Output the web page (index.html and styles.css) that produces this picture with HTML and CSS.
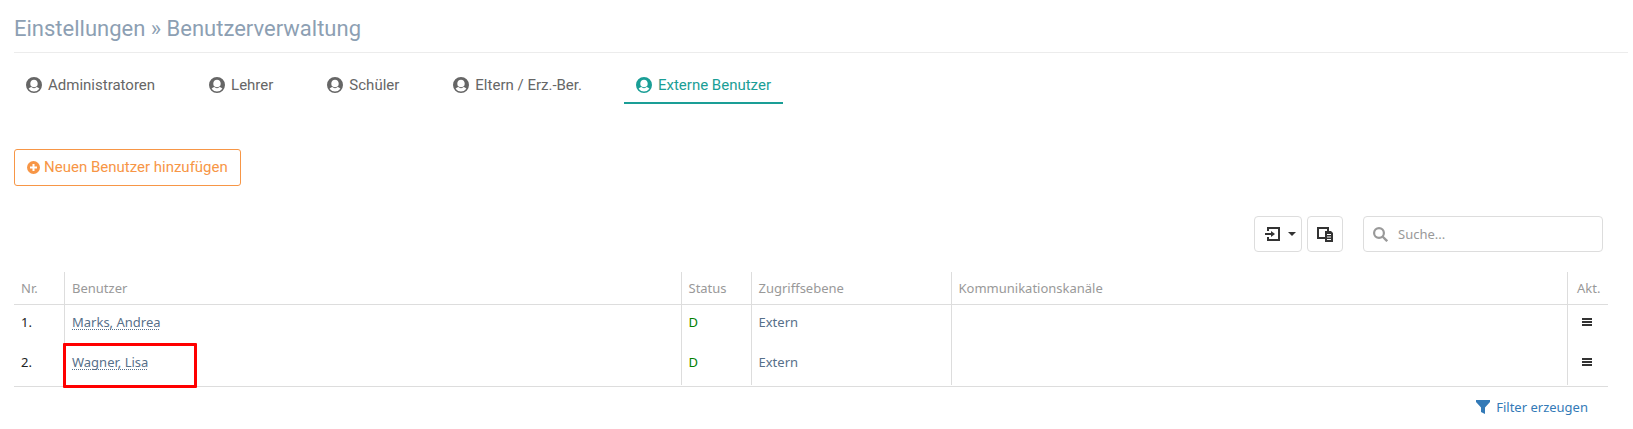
FILE: index.html
```html
<!DOCTYPE html>
<html lang="de">
<head>
  <meta charset="UTF-8" />
  <meta name="viewport" content="width=device-width, initial-scale=1" />
  <title>Einstellungen » Benutzerverwaltung</title>
  <link rel="stylesheet" href="styles.css">
</head>
<body>
  <!-- shared icons -->
  <svg class="sprite" aria-hidden="true">
    <symbol id="icon-user" viewBox="0 0 16 16">
      <path fill="currentColor" fill-rule="evenodd" d="M8 0a8 8 0 1 0 0 16A8 8 0 0 0 8 0zM8 2.800c2.200 0 3.700 1.500 3.700 3.700 0 1.400-.5 2.600-1.300 3.400 1.600.3 2.500 1 3 1.900A6.600 6.600 0 0 1 8 14.600a6.600 6.600 0 0 1-5.400-2.800c.5-.9 1.400-1.600 3-1.900-.8-.8-1.300-2-1.300-3.400 0-2.200 1.500-3.700 3.700-3.700z" />
      <path fill="none" stroke="currentColor" d="M5.400 9.600c1.400 1.500 3.800 1.500 5.200 0" />
    </symbol>
    <symbol id="icon-menu" viewBox="0 0 10 8">
      <path fill="currentColor" d="M0 0h10v2H0zM0 3h10v2H0zM0 6h10v2H0z" />
    </symbol>
  </svg>

  <h1>Einstellungen » Benutzerverwaltung</h1>

  <nav class="tabs">
    <a href="#" class="tab"><svg class="user-icon"><use href="#icon-user" /></svg>Administratoren</a>
    <a href="#" class="tab"><svg class="user-icon"><use href="#icon-user" /></svg>Lehrer</a>
    <a href="#" class="tab"><svg class="user-icon"><use href="#icon-user" /></svg>Schüler</a>
    <a href="#" class="tab"><svg class="user-icon"><use href="#icon-user" /></svg>Eltern / Erz.-Ber.</a>
    <a href="#" class="tab active" aria-current="page"><svg class="user-icon"><use href="#icon-user" /></svg>Externe Benutzer</a>
  </nav>

  <main>
    <button type="button" class="add-user">
      <svg class="plus-icon" viewBox="0 0 13 13">
        <circle cx="6.500" cy="6.500" r="6.500" fill="currentColor" />
        <path d="M6.500 3v7M3 6.500h7" stroke="#fff" stroke-width="2" />
      </svg>
      Neuen Benutzer hinzufügen
    </button>

    <div class="toolbar">
      <button type="button" class="tool export" aria-label="Exportieren">
        <svg width="16" height="14" viewBox="0 0 16 14">
          <path d="M3 4V1h11v12H3v-3" fill="none" stroke="currentColor" stroke-width="2" />
          <path d="M0 7h8" stroke="currentColor" stroke-width="2" />
          <path d="M6 4l4 3-4 3z" fill="currentColor" />
        </svg>
        <svg width="8" height="4" viewBox="0 0 8 4">
          <path d="M0 0h8L4 4z" fill="currentColor" />
        </svg>
      </button>
      <button type="button" class="tool" aria-label="Spalten">
        <svg width="16" height="15" viewBox="0 0 16 15">
          <path d="M8 11H1V1h10v3" fill="none" stroke="currentColor" stroke-width="2" />
          <path d="M8 4h6l2 2v9H8z" fill="currentColor" />
          <path d="M10 7.500h4M10 10h4M10 12.500h4" stroke="#fff" />
        </svg>
      </button>
      <label class="search">
        <svg width="15" height="15" viewBox="0 0 15 15">
          <circle cx="6" cy="6" r="4.900" fill="none" stroke="currentColor" stroke-width="2.200" />
          <path d="M9.500 9.500l4.700 4.700" stroke="currentColor" stroke-width="2.400" />
        </svg>
        <input type="text" placeholder="Suche..." aria-label="Suche" />
      </label>
    </div>

    <div class="table-wrap">
      <table>
        <thead>
          <tr>
            <th class="col-nr">Nr.</th>
            <th>Benutzer</th>
            <th class="col-status">Status</th>
            <th class="col-level">Zugriffsebene</th>
            <th>Kommunikationskanäle</th>
            <th class="col-action">Akt.</th>
          </tr>
        </thead>
        <tbody>
          <tr>
            <td class="nr">1.</td>
            <td><a href="#" class="user">Marks, Andrea</a></td>
            <td class="status">D</td>
            <td>Extern</td>
            <td></td>
            <td class="action"><button type="button" class="menu" aria-label="Aktionen"><svg width="10" height="8"><use href="#icon-menu" /></svg></button></td>
          </tr>
          <tr>
            <td class="nr">2.</td>
            <td class="marked"><a href="#" class="user">Wagner, Lisa</a></td>
            <td class="status">D</td>
            <td>Extern</td>
            <td></td>
            <td class="action"><button type="button" class="menu" aria-label="Aktionen"><svg width="10" height="8"><use href="#icon-menu" /></svg></button></td>
          </tr>
        </tbody>
      </table>
    </div>

    <a href="#" class="filter">
      <svg width="14" height="14" viewBox="0 0 14 14">
        <path d="M0 0h14v2L9 7.500V14l-4-2V7.500L0 2z" fill="currentColor" />
      </svg>
      Filter erzeugen
    </a>
  </main>
</body>
</html>
```
FILE: styles.css
```css
*,
*::after {
  box-sizing: border-box;
}

body {
  margin: 0;
  padding: 13px 5px 0 14px;
  background: #fff;
  color: #57708a;
  font-family: "Noto Sans", "Open Sans", sans-serif;
  font-size: 13px;
  line-height: 20px;
}

svg {
  display: block;
  flex-shrink: 0;
}

.sprite {
  position: absolute;
  width: 0;
  height: 0;
}

h1 {
  margin: 0;
  padding-bottom: 7px;
  border-bottom: 1px solid #ececec;
  color: #8d9fb3;
  font-family: Roboto, sans-serif;
  font-size: 22px;
  font-weight: 400;
  line-height: 32px;
}

/* Tabs */
.tabs {
  display: flex;
  gap: 30px;
  margin-top: 15px;
}

.tab {
  display: flex;
  align-items: center;
  gap: 6px;
  padding: 7px 12px;
  border-bottom: 2px solid transparent;
  color: #666;
  font-family: Roboto, sans-serif;
  font-size: 15px;
  text-decoration: none;
}

.tab.active {
  border-bottom-color: #1a9e96;
  color: #1a9e96;
}

.user-icon {
  width: 16px;
  height: 16px;
}

main {
  display: flex;
  flex-direction: column;
  align-items: flex-start;
  padding-right: 20px;
}

.add-user {
  display: flex;
  align-items: center;
  gap: 4px;
  margin-top: 45px;
  padding: 8px 12px 9px;
  border: 1px solid #f79646;
  border-radius: 3px;
  background: #fff;
  color: #f79646;
  font-family: Roboto, sans-serif;
  font-size: 15px;
  line-height: 18px;
  cursor: pointer;
}

.plus-icon {
  width: 13px;
  height: 13px;
}

/* Toolbar above the table */
.toolbar {
  display: flex;
  align-self: flex-end;
  gap: 5px;
  margin: 30px 5px 0 0;
}

.tool {
  display: flex;
  align-items: center;
  justify-content: center;
  gap: 7px;
  width: 36px;
  height: 36px;
  padding: 0;
  border: 1px solid #ddd;
  border-radius: 4px;
  background: #fff;
  color: #333;
  cursor: pointer;
}

.tool.export {
  width: 48px;
  padding-left: 5px;
}

.search {
  display: flex;
  align-items: center;
  gap: 8px;
  width: 240px;
  height: 36px;
  margin-left: 15px;
  padding: 0 9px;
  border: 1px solid #ddd;
  border-radius: 4px;
  color: #999;
}

.search input {
  width: 100%;
  border: none;
  outline: none;
  font: inherit;
}

.search input::placeholder {
  color: #999;
}

/* User table */
.table-wrap {
  width: 100%;
  margin-top: 20px;
  padding-bottom: 1px;
  border-bottom: 1px solid #ddd;
}

table {
  width: 100%;
  table-layout: fixed;
  border-collapse: separate;
  border-spacing: 0;
}

th,
td {
  padding: 7px 7px 13px;
  border-left: 1px solid #ddd;
  text-align: left;
  vertical-align: top;
}

th {
  padding: 6px 7px;
  border-bottom: 1px solid #ddd;
  color: #999;
  font-weight: 400;
}

th:first-child,
td:first-child {
  border-left: none;
}

.col-nr {
  width: 50px;
}

.col-status {
  width: 70px;
}

.col-level {
  width: 200px;
}

.col-action {
  width: 41px;
  padding-left: 9px;
  padding-right: 0;
}

.nr {
  color: #222;
}

.status {
  color: #008000;
}

.user {
  color: inherit;
  text-decoration: underline dotted 1px;
  text-decoration-skip-ink: none;
  text-underline-offset: 2px;
}

/* Highlight around a single user */
.marked {
  position: relative;
}

.marked::after {
  content: "";
  position: absolute;
  top: -2px;
  left: -2px;
  width: 134px;
  height: 45px;
  border: 3px solid #f00;
  border-radius: 1px;
  pointer-events: none;
}

.action {
  padding-left: 14px;
}

.menu {
  display: flex;
  align-items: center;
  height: 20px;
  padding: 0;
  border: none;
  background: none;
  color: #333;
  cursor: pointer;
}

.filter {
  display: flex;
  align-self: flex-end;
  align-items: center;
  gap: 6px;
  margin: 10px 20px 0 0;
  color: #337ab7;
  text-decoration: none;
}
```
